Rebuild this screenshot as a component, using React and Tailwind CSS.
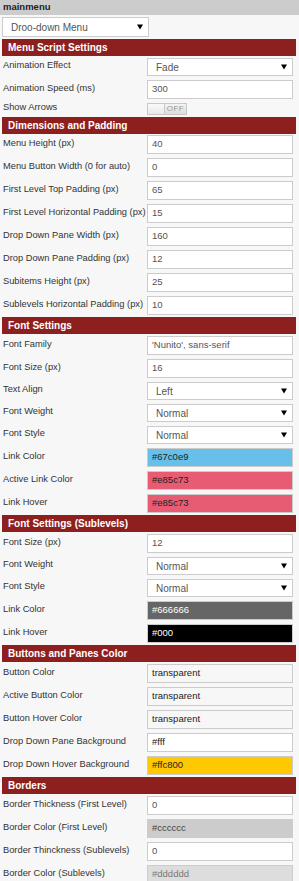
import React from 'react';

const Arrow = () => (
  <svg width="6" height="6" viewBox="0 0 6 6" className="flex-shrink-0">
    <polygon points="0,0.5 6,0.5 3,5.5" fill="#000" />
  </svg>
);

function Select({ value, className = 'w-[146px] h-[18px]' }) {
  return (
    <div className={`${className} flex items-center justify-between bg-white border border-[#cccccc] pl-[8px] pr-[5px] text-[10px] text-[#555]`}>
      <span>{value}</span>
      <Arrow />
    </div>
  );
}

function Field({ value, bg = 'bg-white', text = 'text-[#555]' }) {
  return (
    <div className={`w-[146px] h-[19px] flex items-center border border-[#cccccc] pl-[4px] text-[9.5px] ${bg} ${text}`}>
      {value}
    </div>
  );
}

function Toggle() {
  return (
    <div className="w-[40px] h-[12px] flex border border-[#c8c8c8] bg-gradient-to-b from-[#f4f4f4] to-[#dcdcdc]">
      <div className="w-[17px] h-full border-r border-[#c8c8c8] bg-gradient-to-b from-[#fafafa] to-[#e8e8e8]" />
      <div className="flex-1 flex items-center justify-center text-[8px] text-[#999] tracking-[0.5px]">OFF</div>
    </div>
  );
}

function Row({ label, children }) {
  return (
    <div className="flex items-center">
      <div className="w-[145px] pl-[1px] mb-[3px] leading-[9px] whitespace-nowrap text-[9.3px] text-[#333]">{label}</div>
      <div className="relative">{children}</div>
    </div>
  );
}

function Section({ title, pt = 'pt-[2px]', children }) {
  return (
    <div>
      <div className="ml-[2px] w-[294px] h-[17px] bg-[#8e1f1f] flex items-center pl-[6px] text-[10px] font-bold text-white">
        {title}
      </div>
      <div className={`pl-[2px] ${pt} pb-[2px] flex flex-col gap-[4px]`}>{children}</div>
    </div>
  );
}

export default function App() {
  return (
    <div className="w-[299px] min-h-[881px] bg-[#f7f7f7] font-['Liberation_Sans',Arial,sans-serif] overflow-hidden">
      <div className="h-[15px] bg-[#cccccc] flex items-center pl-[3px] text-[9.5px] font-bold text-[#222]">mainmenu</div>
      <div className="pl-[2px] pt-[2px] pb-[2px]">
        <Select value="Droo-down Menu" className="w-[147px] h-[20px]" />
      </div>

      <Section title="Menu Script Settings">
        <Row label="Animation Effect"><Select value="Fade" /></Row>
        <Row label="Animation Speed (ms)"><Field value="300" /></Row>
        <Row label="Show Arrows"><Toggle /></Row>
      </Section>

      <Section title="Dimensions and Padding" pt="pt-[1px]">
        <Row label="Menu Height (px)"><Field value="40" /></Row>
        <Row label="Menu Button Width (0 for auto)"><Field value="0" /></Row>
        <Row label="First Level Top Padding (px)"><Field value="65" /></Row>
        <Row label="First Level Horizontal Padding (px)"><Field value="15" /></Row>
        <Row label="Drop Down Pane Width (px)"><Field value="160" /></Row>
        <Row label="Drop Down Pane Padding (px)"><Field value="12" /></Row>
        <Row label="Subitems Height (px)"><Field value="25" /></Row>
        <Row label="Sublevels Horizontal Padding (px)"><Field value="10" /></Row>
      </Section>

      <Section title="Font Settings">
        <Row label="Font Family"><Field value="'Nunito', sans-serif" /></Row>
        <Row label="Font Size (px)"><Field value="16" /></Row>
        <Row label="Text Align"><Select value="Left" /></Row>
        <Row label="Font Weight"><Select value="Normal" /></Row>
        <Row label="Font Style"><Select value="Normal" /></Row>
        <Row label="Link Color"><Field value="#67c0e9" bg="bg-[#67c0e9]" text="text-[#222]" /></Row>
        <Row label="Active Link Color"><Field value="#e85c73" bg="bg-[#e85c73]" text="text-[#222]" /></Row>
        <Row label="Link Hover"><Field value="#e85c73" bg="bg-[#e85c73]" text="text-[#222]" /></Row>
      </Section>

      <Section title="Font Settings (Sublevels)">
        <Row label="Font Size (px)"><Field value="12" /></Row>
        <Row label="Font Weight"><Select value="Normal" /></Row>
        <Row label="Font Style"><Select value="Normal" /></Row>
        <Row label="Link Color"><Field value="#666666" bg="bg-[#666666]" text="text-white" /></Row>
        <Row label="Link Hover"><Field value="#000" bg="bg-black" text="text-white" /></Row>
      </Section>

      <Section title="Buttons and Panes Color">
        <Row label="Button Color"><Field value="transparent" bg="bg-[#f7f7f7]" text="text-[#222]" /></Row>
        <Row label="Active Button Color"><Field value="transparent" bg="bg-[#f7f7f7]" text="text-[#222]" /></Row>
        <Row label="Button Hover Color"><Field value="transparent" bg="bg-[#f7f7f7]" text="text-[#222]" /></Row>
        <Row label="Drop Down Pane Background"><Field value="#fff" bg="bg-white" text="text-[#222]" /></Row>
        <Row label="Drop Down Hover Background"><Field value="#ffc800" bg="bg-[#ffc800]" text="text-[#222]" /></Row>
      </Section>

      <Section title="Borders">
        <Row label="Border Thickness (First Level)"><Field value="0" /></Row>
        <Row label="Border Color (First Level)"><Field value="#cccccc" bg="bg-[#cccccc]" text="text-[#444]" /></Row>
        <Row label="Border Thinckness (Sublevels)"><Field value="0" /></Row>
        <Row label="Border Color (Sublevels)"><Field value="#dddddd" bg="bg-[#dddddd]" text="text-[#777]" /></Row>
      </Section>
    </div>
  );
}
